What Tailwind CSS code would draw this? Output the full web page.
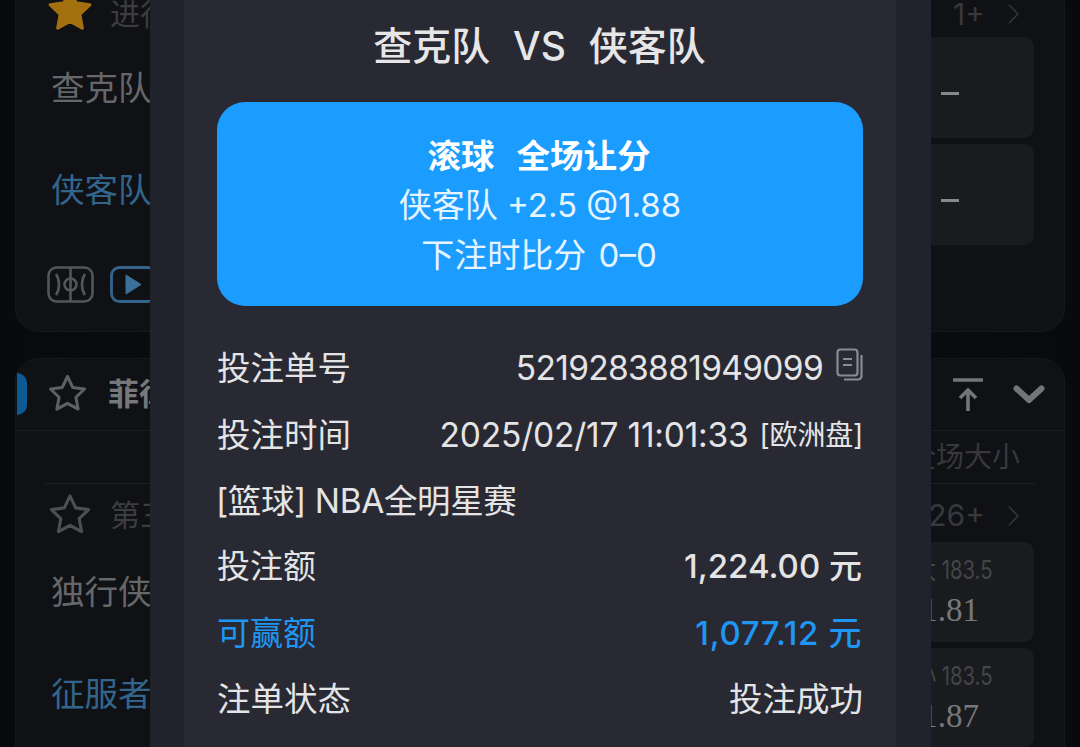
<!doctype html>
<html lang="zh"><head><meta charset="utf-8"><script src="https://cdn.jsdelivr.net/npm/@tailwindcss/browser@4"></script></head>
<body class="m-0 bg-[#0a0b0f]">
<div class="relative w-[1080px] h-[747px] overflow-hidden font-['Inter','Noto_Sans_CJK_SC',sans-serif] bg-gradient-to-r from-[#090a0e] via-[#0d0e12] to-[#090a0e]">
  <!-- background list -->
  <div class="ml-[15px] w-[1050px] -mt-[20px] h-[352px] rounded-[24px] border border-[#17181c] bg-[#101115] pl-[31px] pr-[30px] box-border">
    <div class="h-[56px] pt-[10px] flex items-center justify-between">
      <div class="flex items-center gap-[14px]">
        <svg class="w-[52px] h-[50px] -mt-[8px] -ml-[3px]" viewBox="0 0 24 24"><path fill="#a3700f" stroke="#a3700f" stroke-linejoin="round" stroke-width="1.500" d="M12 2.500l2.900 6.100 6.600.9-4.800 4.600 1.200 6.600-5.900-3.200-5.900 3.200 1.200-6.600-4.800-4.600 6.600-.9z"/></svg>
        <span class="text-[30px] text-[#3c3d41]">进行中</span>
      </div>
      <div class="flex items-center gap-[24px] text-[30px] text-[#37383c] pr-[15px]"><span class="relative left-[1px]">1+</span>
        <svg class="w-[11px] h-[24px]" viewBox="0 0 12 24" fill="none" stroke="#37383c" stroke-width="1.600"><path d="M1 2l10 10L1 22"/></svg></div>
    </div>
    <div class="flex justify-between">
      <div class="flex flex-col gap-[1px] pl-[4px] pt-[1px]">
        <div class="h-[101px] flex items-center text-[33.500px] text-[#66676a]">查克队</div>
        <div class="h-[101px] flex items-center text-[33.500px] text-[#33658c]">侠客队</div>
      </div>
      <div class="flex flex-col gap-[6px] w-[168px]">
        <div class="h-[101px] pt-[12px] rounded-[10px] bg-[#1a1b1e] flex items-center justify-center"><span class="block w-[18px] h-[2.500px] bg-[#88898c]"></span></div>
        <div class="h-[101px] pt-[12px] rounded-[10px] bg-[#1a1b1e] flex items-center justify-center"><span class="block w-[18px] h-[2.500px] bg-[#88898c]"></span></div>
      </div>
    </div>
    <div class="flex items-center gap-[16px] mt-[21px]">
      <svg class="w-[47px] h-[37px]" viewBox="0 0 47 37" fill="none" stroke="#545558" stroke-width="2.600"><rect x="1.500" y="1.500" width="44" height="34" rx="8"/><path d="M23.500 1v35"/><circle cx="23.500" cy="18.500" r="6"/><path d="M9 8c4 6 4 15 0 21M38 8c-4 6-4 15 0 21"/></svg>
      <svg class="w-[47px] h-[37px]" viewBox="0 0 47 37" fill="none"><rect x="1.500" y="1.500" width="44" height="34" rx="8" stroke="#33658c" stroke-width="2.800"/><path d="M16 9l15 9.500-15 9.500z" fill="#3a7099" stroke="#3a7099" stroke-linejoin="round"/></svg>
    </div>
  </div>
  <div class="ml-[15px] w-[1050px] mt-[26px] h-[440px] rounded-[24px] border border-[#17181c] bg-[#101115] box-border relative">
    <div class="absolute left-[1px] top-[14px] w-[10px] h-[42px] rounded-r-[10px] bg-[#0d5a94]"></div>
    <div class="h-[72px] border-b border-[#1b1c20] box-border flex items-center justify-between pl-[32px] pr-[19px]">
      <div class="flex items-center gap-[18px]">
        <svg class="w-[45px] h-[43px] -ml-[3px] -mt-[2px]" viewBox="0 0 24 24" fill="none" stroke="#5f6063" stroke-width="1.700" stroke-linejoin="round"><path d="M12 2.500l2.900 6.100 6.600.9-4.800 4.600 1.200 6.600-5.900-3.200-5.900 3.200 1.200-6.600-4.800-4.600 6.600-.9z"/></svg>
        <span class="text-[31px] font-bold text-[#77787b]">菲律宾</span>
      </div>
      <div class="flex items-center gap-[30px]">
        <svg class="w-[30px] h-[34px]" viewBox="0 0 30 34" fill="none" stroke="#747578" stroke-width="3.600"><path d="M0 2h30M15 33V12M7 20l8-8 8 8"/></svg>
        <svg class="w-[32px] h-[19px]" viewBox="0 0 32 19" fill="none" stroke="#747578" stroke-width="6" stroke-linecap="round" stroke-linejoin="round"><path d="M3.500 3.500l12.500 11.500L28.500 3.500"/></svg>
      </div>
    </div>
    <div class="mx-[29px] h-[53px] border-b border-[#1d1e22] box-border flex items-center justify-end pr-[15px] text-[28px] text-[#37383c]">全场大小</div>
    <div class="pl-[32px] pr-[30px] h-[58px] pt-[5px] flex items-center justify-between">
      <div class="flex items-center gap-[15px]">
        <svg class="w-[50px] h-[47px] -ml-[3px] -mt-[2px]" viewBox="0 0 24 24" fill="none" stroke="#4d4e51" stroke-width="1.600" stroke-linejoin="round"><path d="M12 2.500l2.900 6.100 6.600.9-4.800 4.600 1.200 6.600-5.900-3.200-5.900 3.200 1.200-6.600-4.800-4.600 6.600-.9z"/></svg>
        <span class="text-[30px] text-[#3c3d41]">第三节</span>
      </div>
      <div class="flex items-center gap-[24px] text-[30px] text-[#37383c] pr-[15px]"><span class="relative left-[1px]">26+</span>
        <svg class="w-[11px] h-[24px]" viewBox="0 0 12 24" fill="none" stroke="#37383c" stroke-width="1.600"><path d="M1 2l10 10L1 22"/></svg></div>
    </div>
    <div class="flex justify-between pl-[35px] pr-[30px]">
      <div class="flex flex-col gap-[2px]">
        <div class="h-[100px] flex items-center text-[33.500px] text-[#66676a]">独行侠</div>
        <div class="h-[100px] flex items-center text-[33.500px] text-[#33658c]">征服者</div>
      </div>
      <div class="flex flex-col gap-[6px] w-[168px]">
        <div class="h-[100px] rounded-[10px] bg-[#1a1b1e] flex flex-col items-center justify-center">
          <span class="text-[26px] leading-[36px] text-[#444548] scale-x-[.78] whitespace-nowrap pl-[10px]">大 183.5</span>
          <span class="text-[33px] leading-[44px] text-[#77787b] font-['Liberation_Serif',serif]">1.81</span></div>
        <div class="h-[100px] rounded-[10px] bg-[#1a1b1e] flex flex-col items-center justify-center">
          <span class="text-[26px] leading-[36px] text-[#444548] scale-x-[.78] whitespace-nowrap pl-[10px]">小 183.5</span>
          <span class="text-[33px] leading-[44px] text-[#77787b] font-['Liberation_Serif',serif]">1.87</span></div>
      </div>
    </div>
  </div>
  <!-- modal -->
  <div class="absolute left-[150px] top-0 w-[781px] h-[747px] bg-[#20232b] pl-[34px] pr-[35px]">
    <div class="h-full bg-[#282932] px-[33px] text-[33.500px] text-[#e4e4e6]">
      <div class="h-[102px] pb-[10px] pr-[1px] flex items-center justify-center text-[39px] font-medium text-[#e6e6e8] whitespace-pre [word-spacing:1px]">查克队  VS  侠客队</div>
      <div class="h-[204px] pt-[4px] rounded-[28px] bg-[#1a9dff] flex flex-col items-center justify-center text-[33.500px] leading-[49.500px] text-[#e6f4ff] whitespace-pre">
        <div class="font-bold text-white flex gap-[22px] pr-[2px]"><span>滚球</span><span>全场让分</span></div>
        <div class="text-[33px]">侠客队 +2.5 @1.88</div>
        <div class="text-[33px] [word-spacing:3px] pr-[2px]">下注时比分 0–0</div>
      </div>
      <div class="mt-[29.500px]">
        <div class="h-[66.200px] flex items-center justify-between"><span>投注单号</span>
          <span class="flex items-center gap-[13px] tracking-[-0.670px]">5219283881949099
            <svg class="w-[27px] h-[33px] -mt-[8px]" viewBox="0 0 27 33" fill="none" stroke="#8a8b94" stroke-width="2.200"><rect x="1.500" y="1.500" width="20" height="26" rx="3"/><path d="M7 11h9M7 17h9M25.500 7v21a3.500 3.500 0 0 1-3.500 3.500H8"/></svg></span></div>
        <div class="h-[66.200px] flex items-center justify-between"><span>投注时间</span>
          <span class="flex items-center gap-[11px] tracking-[-0.200px]">2025/02/17 11:01:33<span class="text-[28px]">[欧洲盘]</span></span></div>
        <div class="h-[66.200px] flex items-center tracking-[-0.400px] -ml-[1px]">[篮球] NBA全明星赛</div>
        <div class="h-[66.200px] flex items-center justify-between text-[33px]"><span>投注额</span><span class="font-medium pr-[1px]">1,224.00 元</span></div>
        <div class="h-[66.200px] flex items-center justify-between text-[33px] text-[#1f96f2]"><span>可赢额</span><span class="font-medium tracking-[0.600px] pr-[1px]">1,077.12 元</span></div>
        <div class="h-[66.200px] flex items-center justify-between"><span>注单状态</span><span>投注成功</span></div>
      </div>
    </div>
  </div>
</div>
</body></html>
